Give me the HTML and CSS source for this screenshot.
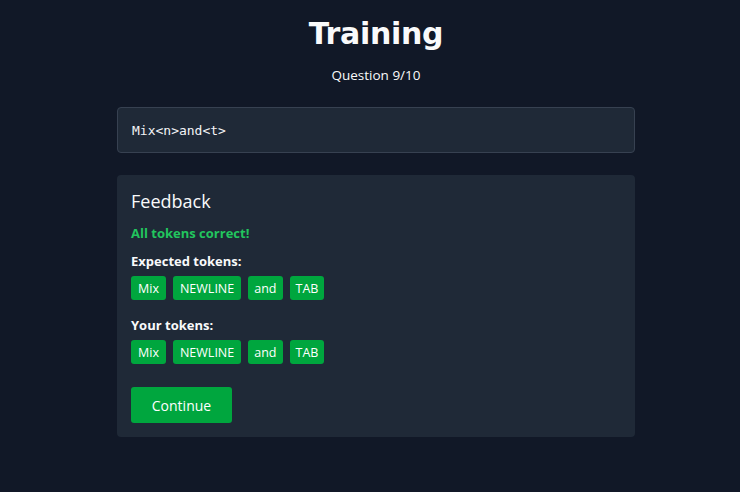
FILE: index.html
```html
<!DOCTYPE html>
<html>
<head>
<meta charset="utf-8">
<link rel="stylesheet" href="styles.css">
</head>
<body>
<main class="page">
  <h1 class="title">Training</h1>
  <p class="progress">Question 9/10</p>
  <div class="code-box"><code>Mix&lt;n&gt;and&lt;t&gt;</code></div>
  <section class="card">
    <h2 class="card-title">Feedback</h2>
    <p class="status">All tokens correct!</p>
    <p class="label">Expected tokens:</p>
    <div class="tokens">
      <span class="token">Mix</span>
      <span class="token">NEWLINE</span>
      <span class="token">and</span>
      <span class="token">TAB</span>
    </div>
    <p class="label">Your tokens:</p>
    <div class="tokens">
      <span class="token">Mix</span>
      <span class="token">NEWLINE</span>
      <span class="token">and</span>
      <span class="token">TAB</span>
    </div>
    <button class="btn">Continue</button>
  </section>
</main>
</body>
</html>
```
FILE: styles.css
```css
html, body {
  margin: 0;
  padding: 0;
  background: #111827;
  color: #f9fafb;
  font-family: "Open Sans", "Noto Sans", sans-serif;
}
body {
  padding-left: 12px;
}
.page {
  width: 518px;
  margin: 0 auto;
  padding-top: 14px;
  display: flex;
  flex-direction: column;
}
.title {
  margin: 0;
  text-align: center;
  font-family: "DejaVu Sans", sans-serif;
  font-weight: 900;
  font-size: 30px;
  line-height: 40px;
  letter-spacing: -0.3px;
}
.progress {
  margin: 12px 0 0;
  text-align: center;
  font-size: 13.5px;
  line-height: 18px;
}
.code-box {
  margin-top: 23px;
  height: 44px;
  border: 1px solid #374151;
  border-radius: 4px;
  background: #1f2937;
  display: flex;
  align-items: center;
  padding: 0 14px;
}
.code-box code {
  font-family: "DejaVu Sans Mono", monospace;
  font-size: 13px;
  color: #f3f4f6;
}
.card {
  margin-top: 22px;
  background: #1f2937;
  border-radius: 4px;
  padding: 14px 14px 14px;
  display: flex;
  flex-direction: column;
  align-items: flex-start;
}
.card-title {
  margin: 0;
  font-size: 18px;
  font-weight: 400;
  line-height: 24px;
}
.status {
  margin: 11px 0 0;
  color: #22c55e;
  font-weight: 700;
  font-size: 13px;
  line-height: 18px;
}
.label {
  margin: 10px 0 0;
  font-weight: 700;
  font-size: 13px;
  line-height: 18px;
}
.tokens + .label {
  margin-top: 16px;
}
.tokens {
  margin-top: 6px;
  display: flex;
  gap: 7px;
}
.token {
  background: #00a63e;
  color: #fff;
  border-radius: 3px;
  height: 24px;
  padding: 0 7px;
  display: flex;
  align-items: center;
  font-size: 12.5px;
}
.token:nth-child(3),
.token:nth-child(4) {
  padding: 0 6px;
}
.btn {
  margin-top: 23px;
  width: 101px;
  height: 36px;
  border: none;
  border-radius: 3px;
  background: #00a63e;
  color: #fff;
  font-family: "Open Sans", "Noto Sans", sans-serif;
  font-size: 14px;
}
```
